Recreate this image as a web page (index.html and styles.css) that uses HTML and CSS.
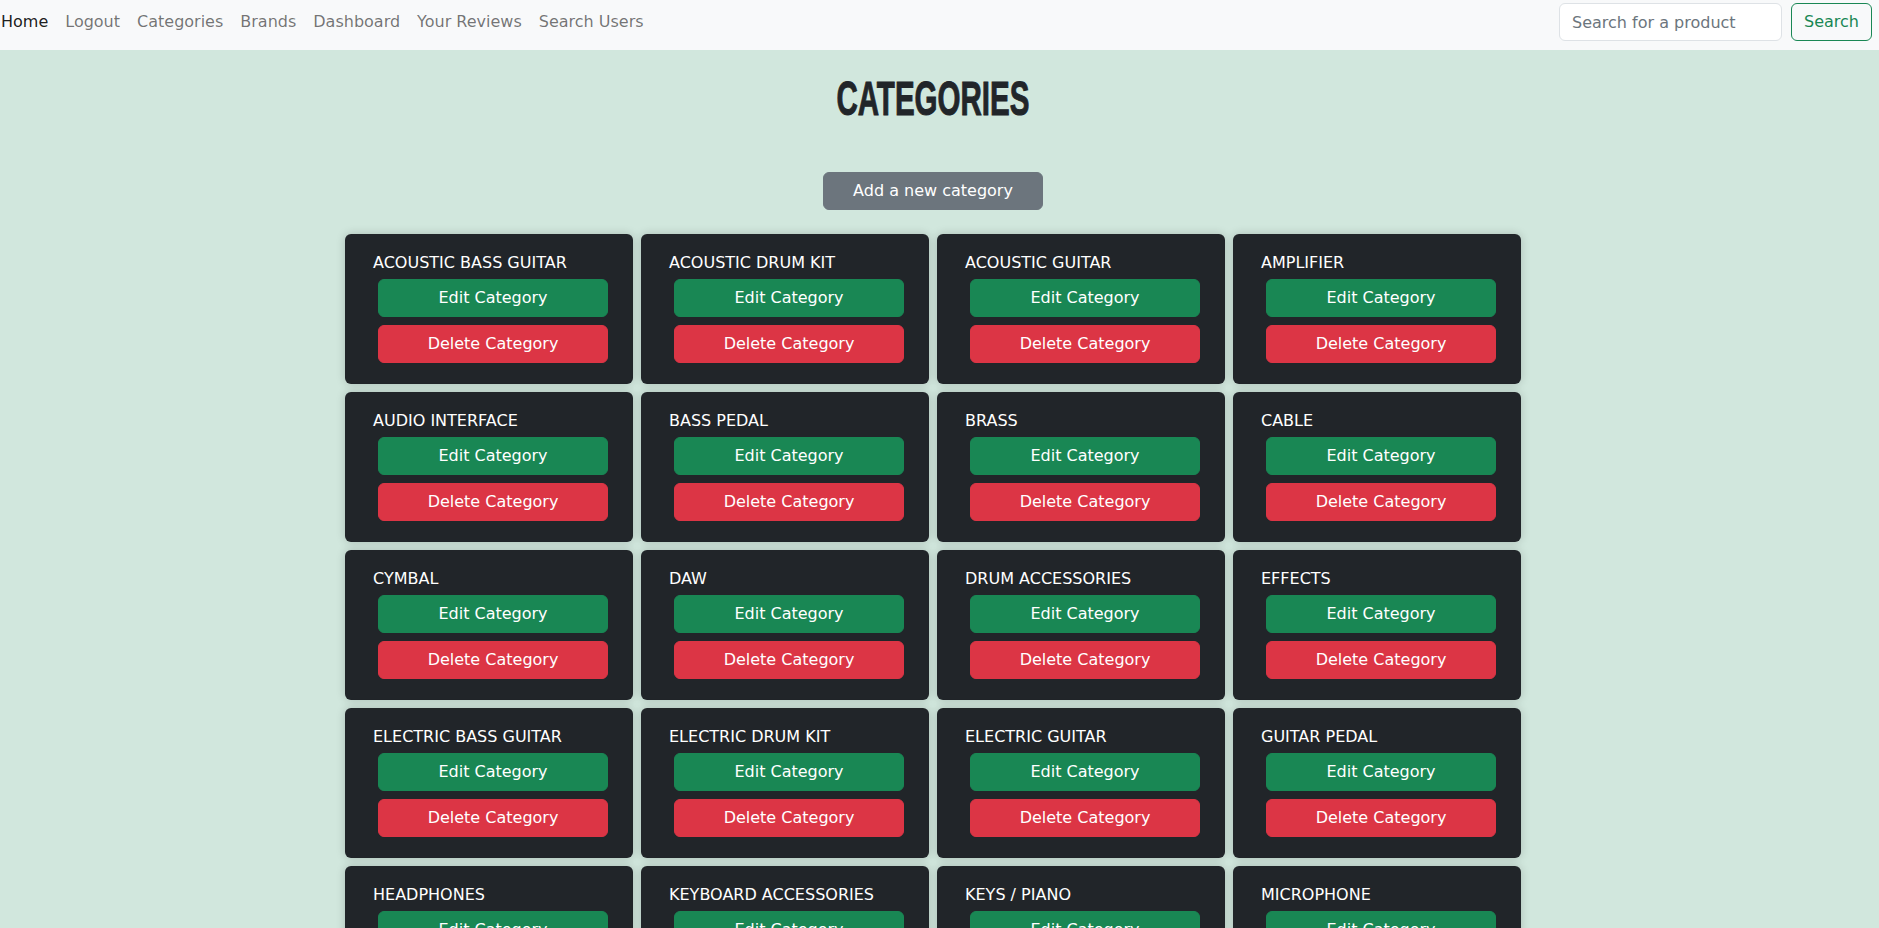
FILE: index.html
```html
<!DOCTYPE html>
<html lang="en">
<head>
<meta charset="utf-8">
<title>Categories</title>
<link rel="stylesheet" href="styles.css">
</head>
<body>
<nav class="navbar">
  <ul class="nav-links">
    <li><a class="nav-link active" href="#">Home</a></li>
    <li><a class="nav-link" href="#">Logout</a></li>
    <li><a class="nav-link" href="#">Categories</a></li>
    <li><a class="nav-link" href="#">Brands</a></li>
    <li><a class="nav-link" href="#">Dashboard</a></li>
    <li><a class="nav-link" href="#">Your Reviews</a></li>
    <li><a class="nav-link" href="#">Search Users</a></li>
  </ul>
  <form class="search-form">
    <input class="search-input" type="search" placeholder="Search for a product">
    <button class="btn-outline" type="button">Search</button>
  </form>
</nav>
<main class="main">
  <h1 class="page-title"><span class="title-text">CATEGORIES</span></h1>
  <div class="add-wrap"><button class="btn btn-gray" type="button">Add a new category</button></div>
  <div class="grid">
    <div class="card"><div class="card-title">ACOUSTIC BASS GUITAR</div><button class="btn btn-green">Edit Category</button><button class="btn btn-red">Delete Category</button></div>
    <div class="card"><div class="card-title">ACOUSTIC DRUM KIT</div><button class="btn btn-green">Edit Category</button><button class="btn btn-red">Delete Category</button></div>
    <div class="card"><div class="card-title">ACOUSTIC GUITAR</div><button class="btn btn-green">Edit Category</button><button class="btn btn-red">Delete Category</button></div>
    <div class="card"><div class="card-title">AMPLIFIER</div><button class="btn btn-green">Edit Category</button><button class="btn btn-red">Delete Category</button></div>
    <div class="card"><div class="card-title">AUDIO INTERFACE</div><button class="btn btn-green">Edit Category</button><button class="btn btn-red">Delete Category</button></div>
    <div class="card"><div class="card-title">BASS PEDAL</div><button class="btn btn-green">Edit Category</button><button class="btn btn-red">Delete Category</button></div>
    <div class="card"><div class="card-title">BRASS</div><button class="btn btn-green">Edit Category</button><button class="btn btn-red">Delete Category</button></div>
    <div class="card"><div class="card-title">CABLE</div><button class="btn btn-green">Edit Category</button><button class="btn btn-red">Delete Category</button></div>
    <div class="card"><div class="card-title">CYMBAL</div><button class="btn btn-green">Edit Category</button><button class="btn btn-red">Delete Category</button></div>
    <div class="card"><div class="card-title">DAW</div><button class="btn btn-green">Edit Category</button><button class="btn btn-red">Delete Category</button></div>
    <div class="card"><div class="card-title">DRUM ACCESSORIES</div><button class="btn btn-green">Edit Category</button><button class="btn btn-red">Delete Category</button></div>
    <div class="card"><div class="card-title">EFFECTS</div><button class="btn btn-green">Edit Category</button><button class="btn btn-red">Delete Category</button></div>
    <div class="card"><div class="card-title">ELECTRIC BASS GUITAR</div><button class="btn btn-green">Edit Category</button><button class="btn btn-red">Delete Category</button></div>
    <div class="card"><div class="card-title">ELECTRIC DRUM KIT</div><button class="btn btn-green">Edit Category</button><button class="btn btn-red">Delete Category</button></div>
    <div class="card"><div class="card-title">ELECTRIC GUITAR</div><button class="btn btn-green">Edit Category</button><button class="btn btn-red">Delete Category</button></div>
    <div class="card"><div class="card-title">GUITAR PEDAL</div><button class="btn btn-green">Edit Category</button><button class="btn btn-red">Delete Category</button></div>
    <div class="card"><div class="card-title">HEADPHONES</div><button class="btn btn-green">Edit Category</button><button class="btn btn-red">Delete Category</button></div>
    <div class="card"><div class="card-title">KEYBOARD ACCESSORIES</div><button class="btn btn-green">Edit Category</button><button class="btn btn-red">Delete Category</button></div>
    <div class="card"><div class="card-title">KEYS / PIANO</div><button class="btn btn-green">Edit Category</button><button class="btn btn-red">Delete Category</button></div>
    <div class="card"><div class="card-title">MICROPHONE</div><button class="btn btn-green">Edit Category</button><button class="btn btn-red">Delete Category</button></div>
  </div>
</main>
</body>
</html>
```

FILE: styles.css
```css
* { box-sizing: border-box; }

body {
  margin: 0;
  background: #d1e7dd;
  font-family: "DejaVu Sans", "Liberation Sans", sans-serif;
  font-size: 16px;
  line-height: 24px;
  color: #212529;
}

.navbar {
  height: 50px;
  background: #f8f9fa;
  display: flex;
  justify-content: space-between;
  align-items: flex-start;
}

.nav-links {
  list-style: none;
  margin: 0;
  padding: 0 0 0 1px;
  display: flex;
  gap: 17px;
}

.nav-link {
  display: block;
  padding: 10px 0;
  color: rgba(0, 0, 0, 0.55);
  text-decoration: none;
}

.nav-link.active { color: rgba(0, 0, 0, 0.9); }

.search-form {
  display: flex;
  gap: 9px;
  margin: 3px 7px 0 0;
}

.search-input {
  width: 223px;
  height: 38px;
  padding: 6px 12px;
  border: 1px solid #dee2e6;
  border-radius: 6px;
  background: #fff;
  font: inherit;
  color: #212529;
}

.search-input::placeholder { color: #6c757d; }

.btn-outline {
  height: 38px;
  padding: 6px 12px;
  border: 1px solid #198754;
  border-radius: 6px;
  background: transparent;
  color: #198754;
  font: inherit;
}

.main {
  padding-right: 13px;
}

.page-title {
  margin: 21px 0 0;
  height: 56px;
  line-height: 56px;
  text-align: center;
  font-family: "Liberation Sans", "DejaVu Sans", sans-serif;
  font-weight: bold;
  font-size: 48px;
  color: #212529;
}

.title-text {
  display: inline-block;
  transform: scaleX(0.615);
  -webkit-text-stroke: 1px #212529;
}

.add-wrap {
  margin-top: 45px;
  text-align: center;
}

.btn {
  display: block;
  height: 38px;
  padding: 6px 12px;
  border: 1px solid transparent;
  border-radius: 6px;
  color: #fff;
  font: inherit;
  text-align: center;
  cursor: pointer;
}

.btn-gray {
  display: inline-block;
  width: 220px;
  background: #6c757d;
  border-color: #6c757d;
}

.btn-green {
  width: 230px;
  margin: 4px 0 0 5px;
  background: #198754;
  border-color: #198754;
}

.btn-red {
  width: 230px;
  margin: 8px 0 0 5px;
  background: #dc3545;
  border-color: #dc3545;
}

.grid {
  margin: 24px auto 0;
  width: 1176px;
  display: grid;
  grid-template-columns: repeat(4, 288px);
  gap: 8px;
}

.card {
  height: 150px;
  padding: 17px 25px 0 28px;
  background: #212529;
  border-radius: 6px;
  box-shadow: 0 0 10px rgba(0, 0, 0, 0.18);
}

.card-title {
  color: #fff;
  white-space: nowrap;
}
```
